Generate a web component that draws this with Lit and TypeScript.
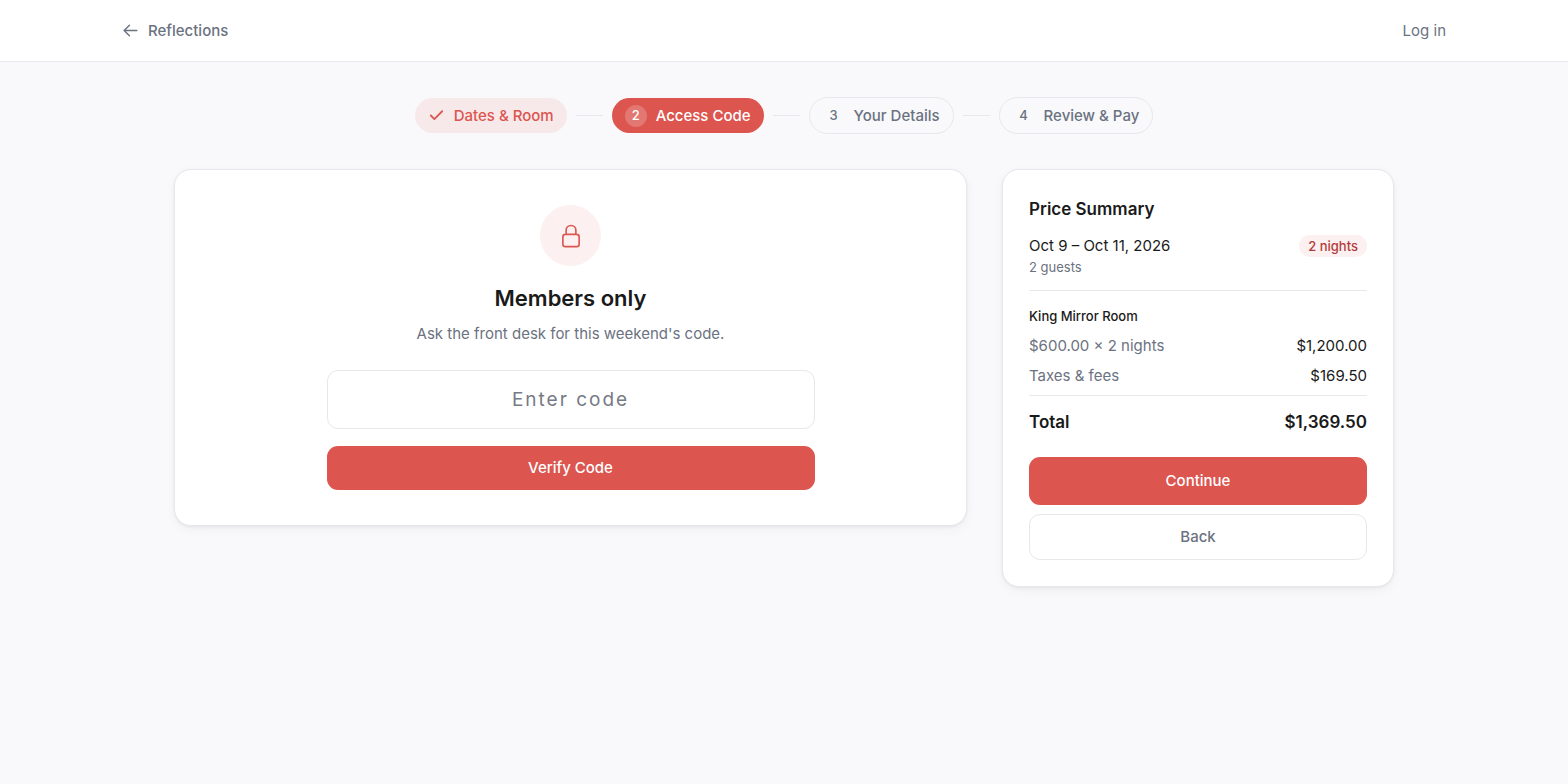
import { LitElement, html, css, svg, nothing } from "lit";
import { customElement, state } from "lit/decorators.js";
import { classMap } from "lit/directives/class-map.js";

type StepState = "done" | "current" | "upcoming";

interface Step {
  label: string;
  state: StepState;
}

const STEPS: Step[] = [
  { label: "Dates & Room", state: "done" },
  { label: "Access Code", state: "current" },
  { label: "Your Details", state: "upcoming" },
  { label: "Review & Pay", state: "upcoming" },
];

const arrowLeft = svg`<path d="M10.5 19.5 3 12m0 0 7.5-7.5M3 12h18"/>`;
const check = svg`<path d="M20 6 9 17l-5-5"/>`;
const lock = svg`<path d="M16.5 10.5V6.75a4.5 4.5 0 1 0-9 0v3.75m-.75 11.25h10.5a2.25 2.25 0 0 0 2.25-2.25v-6.75a2.25 2.25 0 0 0-2.25-2.25H6.75a2.25 2.25 0 0 0-2.25 2.25v6.75a2.25 2.25 0 0 0 2.25 2.25Z"/>`;

@customElement("booking-steps")
export class BookingSteps extends LitElement {
  static styles = css`
    :host { display: block; }
    .steps {
      display: flex;
      flex-wrap: wrap;
      justify-content: center;
      align-items: center;
      gap: 9px;
      margin: 0;
      padding: 0;
      list-style: none;
    }
    .step {
      display: flex;
      align-items: center;
      gap: 9px;
      padding: 6px 13px;
      border-radius: 999px;
      font-size: 15px;
      line-height: 23px;
      font-weight: 500;
      white-space: nowrap;
    }
    .done { background: #f7e9ea; color: #dc554f; }
    .current { background: #dc554f; color: #fff; }
    .upcoming { border: 1px solid #e8e8ec; color: #6b7280; }
    .mark {
      display: flex;
      align-items: center;
      justify-content: center;
      width: 22px;
      height: 22px;
      border-radius: 50%;
      font-size: 13px;
    }
    .done .mark { width: 17px; }
    .current .mark { background: rgba(255, 255, 255, 0.2); }
    .tick {
      width: 17px;
      height: 17px;
      fill: none;
      stroke: currentColor;
      stroke-width: 2.5;
      stroke-linecap: round;
      stroke-linejoin: round;
    }
    .line { width: 27px; height: 1px; background: #e8e8ec; }
  `;

  render() {
    return html`
      <ol class="steps">
        ${STEPS.map(
          (step, i) => html`
            ${i > 0 ? html`<li class="line" role="presentation"></li>` : nothing}
            <li class=${classMap({ step: true, [step.state]: true })} aria-current=${step.state === "current" ? "step" : "false"}>
              <span class="mark">${step.state === "done"
                ? html`<svg class="tick" viewBox="0 0 24 24" aria-hidden="true">${check}</svg>`
                : i + 1}</span>
              <span>${step.label}</span>
            </li>
          `
        )}
      </ol>
    `;
  }
}

const controlStyles = css`
  .button {
    display: block;
    box-sizing: border-box;
    width: 100%;
    border: 0;
    border-radius: 11px;
    padding: 11px 16px;
    font: inherit;
    font-size: 15px;
    line-height: 22px;
    font-weight: 500;
    cursor: pointer;
  }
  .primary { background: #dc554f; color: #fff; }
  .tall { padding: 13px 16px; }
  .outline { background: #fff; color: #6b7280; border: 1px solid #e8e8ec; }
`;

@customElement("access-code")
export class AccessCode extends LitElement {
  @state() private code = "";

  static styles = [
    controlStyles,
    css`
      :host { display: block; }
      .panel { text-align: center; padding: 35px; }
      .badge {
        display: flex;
        align-items: center;
        justify-content: center;
        width: 61px;
        height: 61px;
        margin: 0 auto 17px;
        border-radius: 50%;
        background: #fcf0f0;
        color: #dc554f;
      }
      .lock {
        width: 26px;
        height: 26px;
        fill: none;
        stroke: currentColor;
        stroke-width: 1.5;
        stroke-linecap: round;
        stroke-linejoin: round;
      }
      .title { margin: 0 0 9px; font-size: 22px; line-height: 30px; font-weight: 600; color: #1a1a1a; }
      .hint { margin: 0 0 25px; font-size: 15px; line-height: 23px; color: #6b7280; }
      .form { display: grid; gap: 17px; max-width: 488px; margin: 0 auto; }
      .code {
        box-sizing: border-box;
        width: 100%;
        padding: 15px 16px;
        border: 1px solid #e8e8ec;
        border-radius: 11px;
        background: #fff;
        font: inherit;
        font-size: 19px;
        line-height: 27px;
        letter-spacing: 2px;
        text-align: center;
        color: #1a1a1a;
      }
      .code::placeholder { color: #757a85; opacity: 1; }
    `,
  ];

  render() {
    return html`
      <div class="panel">
        <div class="badge"><svg class="lock" viewBox="0 0 24 24" aria-hidden="true">${lock}</svg></div>
        <h1 class="title">Members only</h1>
        <p class="hint">Ask the front desk for this weekend's code.</p>
        <form class="form" @submit=${(e: Event) => e.preventDefault()}>
          <input
            class="code"
            type="text"
            aria-label="Enter code"
            placeholder="Enter code"
            autocomplete="off"
            .value=${this.code}
            @input=${(e: Event) => (this.code = (e.target as HTMLInputElement).value)}
          />
          <button class="button primary" type="submit">Verify Code</button>
        </form>
      </div>
    `;
  }
}

@customElement("price-summary")
export class PriceSummary extends LitElement {
  static styles = [
    controlStyles,
    css`
      :host { display: block; }
      .panel { padding: 26px; color: #1a1a1a; font-size: 15px; line-height: 22px; }
      .title { margin: 0 0 13px; font-size: 17px; line-height: 26px; font-weight: 600; }
      .stay {
        display: flex;
        justify-content: space-between;
        align-items: flex-start;
        padding-bottom: 13px;
        border-bottom: 1px solid #e8e8ec;
      }
      .guests { font-size: 13px; line-height: 20px; color: #6b7280; }
      .nights {
        padding: 1px 9px;
        border-radius: 999px;
        background: #fcf0f0;
        color: #b23b3b;
        font-size: 13px;
        line-height: 20px;
        font-weight: 500;
      }
      .room { margin: 15px 0 9px; font-size: 13px; line-height: 20px; font-weight: 500; }
      .lines { display: grid; gap: 8px; margin: 0; }
      .row { display: flex; justify-content: space-between; }
      .name { color: #6b7280; }
      .value { margin: 0; }
      .total {
        padding-top: 13px;
        border-top: 1px solid #e8e8ec;
        font-size: 17px;
        line-height: 26px;
        font-weight: 600;
      }
      .actions { display: grid; gap: 9px; margin-top: 22px; }
    `,
  ];

  render() {
    return html`
      <div class="panel">
        <h2 class="title">Price Summary</h2>
        <div class="stay">
          <div>
            <div>Oct 9 – Oct 11, 2026</div>
            <div class="guests">2 guests</div>
          </div>
          <span class="nights">2 nights</span>
        </div>
        <h3 class="room">King Mirror Room</h3>
        <dl class="lines">
          <div class="row"><dt class="name">$600.00 × 2 nights</dt><dd class="value">$1,200.00</dd></div>
          <div class="row"><dt class="name">Taxes &amp; fees</dt><dd class="value">$169.50</dd></div>
          <div class="row total"><dt>Total</dt><dd class="value">$1,369.50</dd></div>
        </dl>
        <div class="actions">
          <button class="button primary tall" type="button">Continue</button>
          <button class="button outline" type="button">Back</button>
        </div>
      </div>
    `;
  }
}

@customElement("app-root")
export class AppRoot extends LitElement {
  static styles = css`
    :host {
      display: block;
      min-height: 100vh;
      background: #f9f9fb;
      color: #1a1a1a;
      font-family: Inter, "Liberation Sans", sans-serif;
      font-size: 15px;
    }
    .header { background: #fff; border-bottom: 1px solid #e8e8ec; }
    .bar {
      display: flex;
      justify-content: space-between;
      align-items: center;
      box-sizing: border-box;
      max-width: 1394px;
      margin: 0 auto;
      padding: 19px 35px;
    }
    .link {
      display: flex;
      align-items: center;
      gap: 9px;
      line-height: 23px;
      color: #6b7280;
      text-decoration: none;
    }
    .back { font-weight: 500; }
    .arrow {
      width: 17px;
      height: 17px;
      fill: none;
      stroke: currentColor;
      stroke-width: 2;
      stroke-linecap: round;
      stroke-linejoin: round;
    }
    .main {
      box-sizing: border-box;
      max-width: 1290px;
      margin: 0 auto;
      padding: 35px;
    }
    .columns {
      display: grid;
      grid-template-columns: minmax(0, 1fr) 392px;
      align-items: start;
      gap: 35px;
      margin-top: 35px;
    }
    .card {
      border: 1px solid #e8e8ec;
      border-radius: 17px;
      background: #fff;
      box-shadow: 0 1px 3px rgba(0, 0, 0, 0.06), 0 4px 12px rgba(0, 0, 0, 0.04);
    }
    @media (max-width: 960px) {
      .columns { grid-template-columns: minmax(0, 1fr); }
    }
  `;

  render() {
    return html`
      <header class="header">
        <nav class="bar">
          <a class="link back" href="#reflections">
            <svg class="arrow" viewBox="0 0 24 24" aria-hidden="true">${arrowLeft}</svg>
            Reflections
          </a>
          <a class="link" href="#login">Log in</a>
        </nav>
      </header>
      <main class="main">
        <booking-steps></booking-steps>
        <div class="columns">
          <access-code class="card"></access-code>
          <price-summary class="card"></price-summary>
        </div>
      </main>
    `;
  }
}
